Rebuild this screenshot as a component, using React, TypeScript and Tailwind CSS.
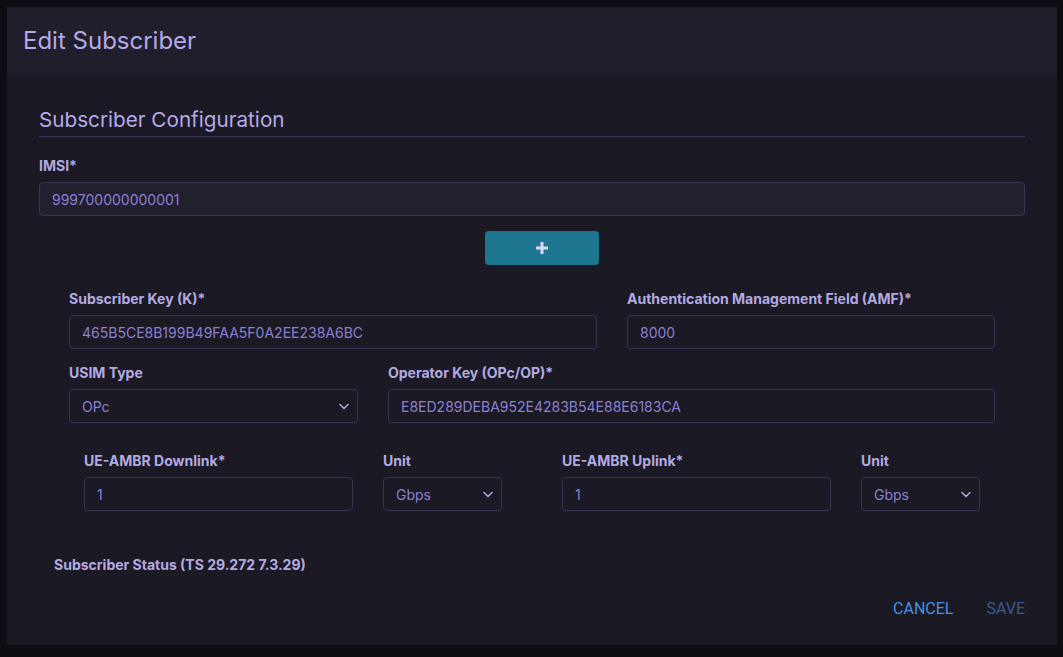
import React from "react";

const font = { fontFamily: "Inter, 'Noto Sans', sans-serif" };

function Label({ children }: { children: React.ReactNode }) {
  return (
    <div className="text-[14px] leading-[22px] font-bold text-[#b3aae0]">
      {children}
    </div>
  );
}

function Input({ value, w, light }: { value: string; w: string; light?: boolean }) {
  return (
    <div
      className={`${w} h-[34px] mt-[5px] rounded-[4px] border border-[#3a3553] flex items-center px-[12px] text-[14px] text-[#8b80d2] ${
        light ? "bg-[#221f2e]" : "bg-[#1b1924]"
      }`}
    >
      {value}
    </div>
  );
}

function Select({ value, w }: { value: string; w: string }) {
  return (
    <div
      className={`${w} h-[34px] mt-[5px] rounded-[4px] border border-[#3a3553] bg-[#1b1924] flex items-center justify-between pl-[12px] pr-[8px] text-[14px] text-[#8b80d2]`}
    >
      <span>{value}</span>
      <svg width="10" height="7" viewBox="0 0 10 7" fill="none">
        <path d="M1 1.5 L5 5.5 L9 1.5" stroke="#b3aae0" strokeWidth="1.5" strokeLinecap="round" strokeLinejoin="round" />
      </svg>
    </div>
  );
}

export default function App() {
  return (
    <div className="w-[1063px] h-[657px] bg-[#0e0d13] pt-[7px] pl-[7px]" style={font}>
      <div className="w-[1050px] h-[638px] bg-[#1b1924] flex flex-col">
        <div className="h-[67px] bg-[#201e2b] flex items-center px-[16px]">
          <h2 className="text-[24px] text-[#b4a9e8] font-normal">Edit Subscriber</h2>
        </div>
        <div className="px-[32px] pt-[32px] flex flex-col flex-1">
          <div className="text-[20.7px] leading-[28px] text-[#b4a9e8] pb-[2px] border-b border-[#3b3458]">
            Subscriber Configuration
          </div>
          <div className="mt-[18px]">
            <Label>IMSI*</Label>
            <Input value="999700000000001" w="w-full" light />
          </div>
          <div className="mt-[15px] ml-[446px] w-[114px] h-[34px] rounded-[4px] bg-[#1d7590] flex items-center justify-center">
            <svg width="12" height="12" viewBox="0 0 12 12">
              <rect x="4.5" y="0" width="3" height="12" fill="#dcd6f5" />
              <rect x="0" y="4.5" width="12" height="3" fill="#dcd6f5" />
            </svg>
          </div>
          <div className="px-[30px] mt-[23px] flex gap-[30px]">
            <div>
              <Label>Subscriber Key (K)*</Label>
              <Input value="465B5CE8B199B49FAA5F0A2EE238A6BC" w="w-[528px]" />
            </div>
            <div>
              <Label>Authentication Management Field (AMF)*</Label>
              <Input value="8000" w="w-[368px]" />
            </div>
          </div>
          <div className="px-[30px] mt-[13px] flex gap-[30px]">
            <div>
              <Label>USIM Type</Label>
              <Select value="OPc" w="w-[289px]" />
            </div>
            <div>
              <Label>Operator Key (OPc/OP)*</Label>
              <Input value="E8ED289DEBA952E4283B54E88E6183CA" w="w-[607px]" />
            </div>
          </div>
          <div className="px-[45px] mt-[27px] flex">
            <div>
              <Label>UE-AMBR Downlink*</Label>
              <Input value="1" w="w-[269px]" />
            </div>
            <div className="ml-[30px]">
              <Label>Unit</Label>
              <Select value="Gbps" w="w-[119px]" />
            </div>
            <div className="ml-[60px]">
              <Label>UE-AMBR Uplink*</Label>
              <Input value="1" w="w-[269px]" />
            </div>
            <div className="ml-[30px]">
              <Label>Unit</Label>
              <Select value="Gbps" w="w-[119px]" />
            </div>
          </div>
          <div className="mt-[43px] pl-[15px]">
            <Label>Subscriber Status (TS 29.272 7.3.29)</Label>
          </div>
          <div
            className="mt-[21px] flex justify-end items-center gap-[33px] text-[16px] uppercase"
            style={{ fontFamily: "Roboto, sans-serif" }}
          >
            <span className="text-[#4a8fe0]">Cancel</span>
            <span className="text-[#3a5a8e]">Save</span>
          </div>
        </div>
      </div>
    </div>
  );
}
